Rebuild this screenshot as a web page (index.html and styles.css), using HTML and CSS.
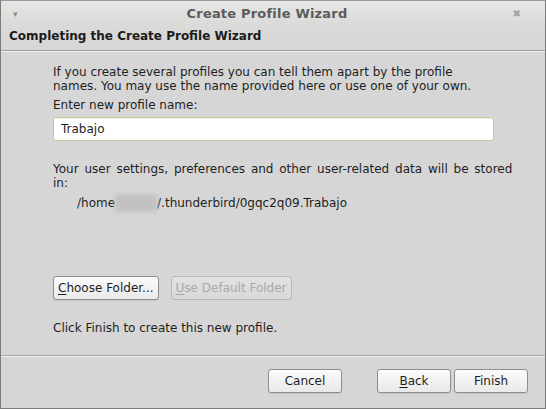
FILE: index.html
```html
<!DOCTYPE html>
<html lang="en">
<head>
  <meta charset="UTF-8">
  <title>Create Profile Wizard</title>
  <link rel="stylesheet" href="styles.css">
</head>
<body>

<div class="window">
  <div class="titlebar">
    <span class="menu-arrow">&#9662;</span>
    <span class="title">Create Profile Wizard</span>
    <span class="close">&#10006;</span>
  </div>

  <div class="wizard-header">Completing the Create Profile Wizard</div>

  <div class="wizard-body">
    <p class="intro">If you create several profiles you can tell them apart by the profile names. You may use the name provided here or use one of your own.</p>
    <label for="nombre">Enter new profile name:</label>
    <div class="name-field">
      <input type="text" id="nombre" value="Trabajo">
    </div>

    <p class="storage">Your user settings, preferences and other user-related data will be stored in:</p>
    <p class="path">/home<span class="blur"></span>/.thunderbird/0gqc2q09.Trabajo</p>

    <div class="folder-buttons">
      <button class="btn"><u>C</u>hoose Folder...</button>
      <button class="btn" disabled><u>U</u>se Default Folder</button>
    </div>

    <p class="finish-note">Click Finish to create this new profile.</p>
  </div>

  <div class="wizard-footer">
    <button class="btn btn-wide">Cancel</button>
    <div class="nav-buttons">
      <button class="btn btn-wide"><u>B</u>ack</button>
      <button class="btn btn-wide">Finish</button>
    </div>
  </div>
</div>

</body>
</html>
```

FILE: styles.css
```css
:root {
  --color-bg: #d6d6d6;
  --color-text: #1e1e1e;
  --color-border: #8e8e8e;
  --color-disabled: #a9a9a9;
}

* {
  box-sizing: border-box;
}

html, body {
  margin: 0;
  padding: 0;
}

body {
  font-family: 'DejaVu Sans', Verdana, sans-serif;
  font-size: 12px;
  color: var(--color-text);
  background-color: var(--color-bg);
}

.window {
  width: 546px;
  height: 409px;
  border: 1px solid #7c7c7c;
  border-top-color: #9a9a9a;
  background-color: var(--color-bg);
  display: flex;
  flex-direction: column;
}

/* Barra de titulo */
.titlebar {
  height: 25px;
  display: flex;
  align-items: center;
  padding: 0 24px 0 12px;
  background: linear-gradient(#e6e6e5, #dadad9);
  color: #5b5b5b;
  font-weight: bold;
  font-size: 13px;
}

.menu-arrow {
  font-size: 9px;
  color: #8a8a8a;
  width: 14px;
  margin-top: 1px;
}

.title {
  flex: 1;
  text-align: center;
  letter-spacing: 0.2px;
}

.close {
  font-size: 10px;
  color: #a2a2a2;
  width: 14px;
  text-align: right;
  margin-top: -1px;
}

.wizard-header {
  height: 25px;
  padding: 3px 8px 0;
  font-weight: bold;
  font-size: 12px;
  color: #1b1b1b;
  background: linear-gradient(#dadad9, #d6d6d6);
  border-bottom: 1px solid #9a9a9a;
  box-shadow: 0 1px 0 #f2f2f2;
}

/* Contenido */
.wizard-body {
  flex: 1;
  padding: 14px 8px 0 52px;
  display: flex;
  flex-direction: column;
}

.wizard-body p {
  margin: 0;
  line-height: 14px;
}

.intro {
  padding-right: 60px;
}

label {
  display: block;
  margin-top: 5px;
  line-height: 14px;
}

.name-field {
  margin-top: 5px;
}

input {
  width: 441px;
  height: 24px;
  padding: 0 7px;
  border: 1px solid #c3cc94;
  border-radius: 3px;
  background-color: white;
  font-family: inherit;
  font-size: 12px;
  color: var(--color-text);
  box-shadow: inset 0 1px 1px rgba(0, 0, 0, 0.06);
  outline: none;
}

.storage {
  margin-top: 21px !important;
  padding-right: 10px;
  word-spacing: 2px;
}

.path {
  margin-top: 4px !important;
  padding-left: 24px;
}

.blur {
  display: inline-block;
  background-color: #c2c2c2;
  filter: blur(2px);
  width: 42px;
  height: 18px;
  vertical-align: -5px;
}

.folder-buttons {
  display: flex;
  gap: 12px;
  margin-top: 64px;
}

.btn {
  height: 24px;
  padding: 0 4px;
  border: 1px solid var(--color-border);
  border-radius: 3px;
  background: linear-gradient(#fbfbfb, #e9e9e9);
  box-shadow: 0 1px 1px rgba(0, 0, 0, 0.08);
  font-family: inherit;
  font-size: 12px;
  color: var(--color-text);
  cursor: pointer;
}

.btn u {
  text-underline-offset: 2px;
}

.btn:disabled {
  color: var(--color-disabled);
  border-color: #b8b8b8;
  background: linear-gradient(#e2e2e2, #d9d9d9);
  box-shadow: none;
  cursor: default;
}

.finish-note {
  margin-top: 21px !important;
}

/* Pie con botones */
.wizard-footer {
  height: 53px;
  border-top: 1px solid #a4a4a4;
  box-shadow: inset 0 1px 0 #f4f4f4;
  display: flex;
  align-items: flex-start;
  padding: 13px 17px 0 267px;
}

.nav-buttons {
  display: flex;
  gap: 3px;
  margin-left: auto;
}

.btn-wide {
  width: 74px;
}
```
